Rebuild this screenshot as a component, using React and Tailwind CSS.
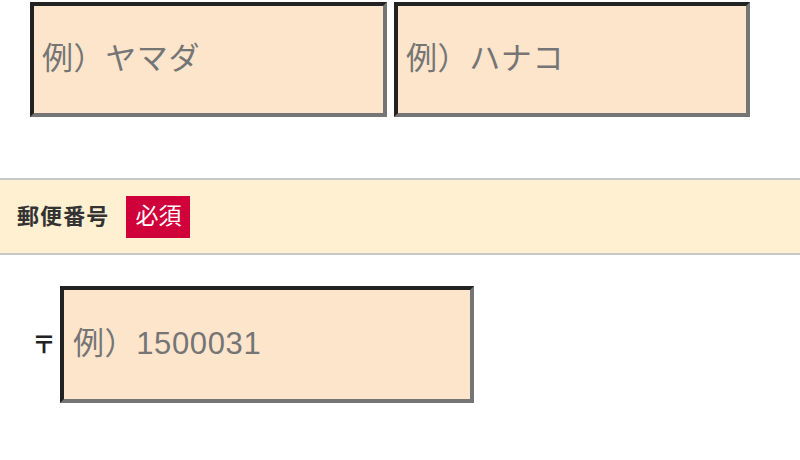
export default function App() {
    const inputCls =
        "h-[115px] border-[4px] border-t-[#222222] border-l-[#222222] border-b-[#757575] border-r-[#757575] bg-[#fde5cc] pl-[8px] pb-[2px] text-[31px] tracking-[0.02em] text-[#333] placeholder:text-[#757575] outline-none";

    return (
        <div className="w-[800px] h-[460px] overflow-hidden bg-white font-['Liberation_Sans','Noto_Sans_CJK_JP',sans-serif]">
            {/* name row */}
            <div className="flex gap-[7px] pl-[30px] pt-[2px]">
                <input className={`${inputCls} w-[357px]`} placeholder="例）ヤマダ" />
                <input className={`${inputCls} w-[356px]`} placeholder="例）ハナコ" />
            </div>

            {/* postal code header */}
            <div className="mt-[61px] h-[77px] flex items-center border-y-2 border-[#c8c8c8] bg-[#fff0d2] pl-[17px]">
                <span className="text-[22px] font-bold text-[#333] tracking-[0.05em]">郵便番号</span>
                <span className="ml-[17px] w-[64px] h-[42px] flex items-center justify-center bg-[#d0003a] text-white text-[23px]">
                    必須
                </span>
            </div>

            {/* postal code input */}
            <div className="mt-[31px] flex items-center pl-[32px]">
                <span className="w-[28px] text-[24px] font-bold text-[#222]">〒</span>
                <input className={`${inputCls} w-[414px] h-[117px] pl-[9px]`} placeholder="例）1500031" />
            </div>
        </div>
    );
}
